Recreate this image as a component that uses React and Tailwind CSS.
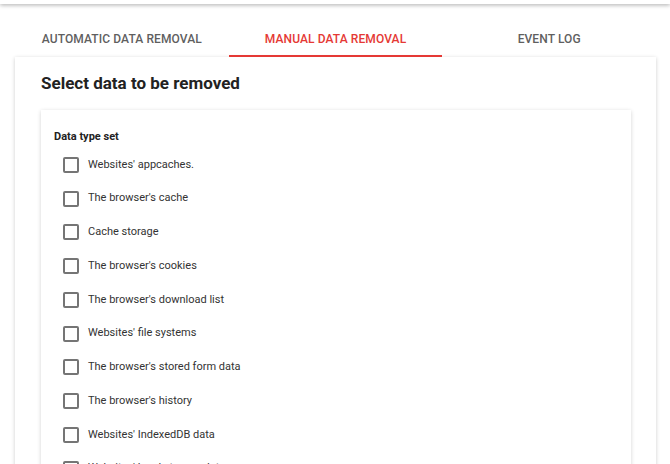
import { useState } from "react";

const dataTypes = [
    "Websites' appcaches.",
    "The browser's cache",
    "Cache storage",
    "The browser's cookies",
    "The browser's download list",
    "Websites' file systems",
    "The browser's stored form data",
    "The browser's history",
    "Websites' IndexedDB data",
    "Websites' local storage data",
];

const tabs = ["AUTOMATIC DATA REMOVAL", "MANUAL DATA REMOVAL", "EVENT LOG"];

const App = () => {
    const [active, setActive] = useState(1);
    const [checked, setChecked] = useState({});

    return (
        <div className="h-[464px] overflow-hidden bg-white text-[#212121] font-['Roboto',sans-serif]">
            <div className="h-[4px] shadow-[0_1px_4px_rgba(0,0,0,0.35)] bg-white" />
            <div className="pl-[15px] pr-[14px] pt-[18px]">
                <div className="flex">
                    {tabs.map((tab, index) => (
                        <button
                            key={tab}
                            onClick={() => setActive(index)}
                            className={`flex-1 h-[35px] text-[12px] font-medium tracking-[0.1px] border-b-2 ${index === active ? "text-[#e53935] border-[#e53935]" : "text-[#5f5f5f] border-transparent"}`}
                        >
                            {tab}
                        </button>
                    ))}
                </div>
                <div className="bg-white shadow-[0_1px_4px_rgba(0,0,0,0.2)] pl-[26px] pr-[25px] pt-[15px] pb-4">
                    <h2 className="text-[17px] font-bold leading-[22px] text-[#222]">Select data to be removed</h2>
                    <div className="mt-[16px] shadow-[0_1px_4px_rgba(0,0,0,0.18)] px-[13px] pt-[19px] pb-4">
                        <h4 className="text-[11px] font-bold leading-[16px] text-[#222]">Data type set</h4>
                        <div className="mt-[3px] flex flex-col">
                            {dataTypes.map((label, index) => (
                                <label key={label} className="flex items-center h-[33.75px] pl-[9px] cursor-pointer">
                                    <span
                                        onClick={() => setChecked({ ...checked, [index]: !checked[index] })}
                                        className={`w-[16px] h-[16px] rounded-[2px] border-2 ${checked[index] ? "bg-[#e53935] border-[#e53935]" : "border-[#757575]"}`}
                                    />
                                    <span className="ml-[9px] text-[11px] text-[#333]">{label}</span>
                                </label>
                            ))}
                        </div>
                    </div>
                </div>
            </div>
        </div>
    );
};

export default App;
